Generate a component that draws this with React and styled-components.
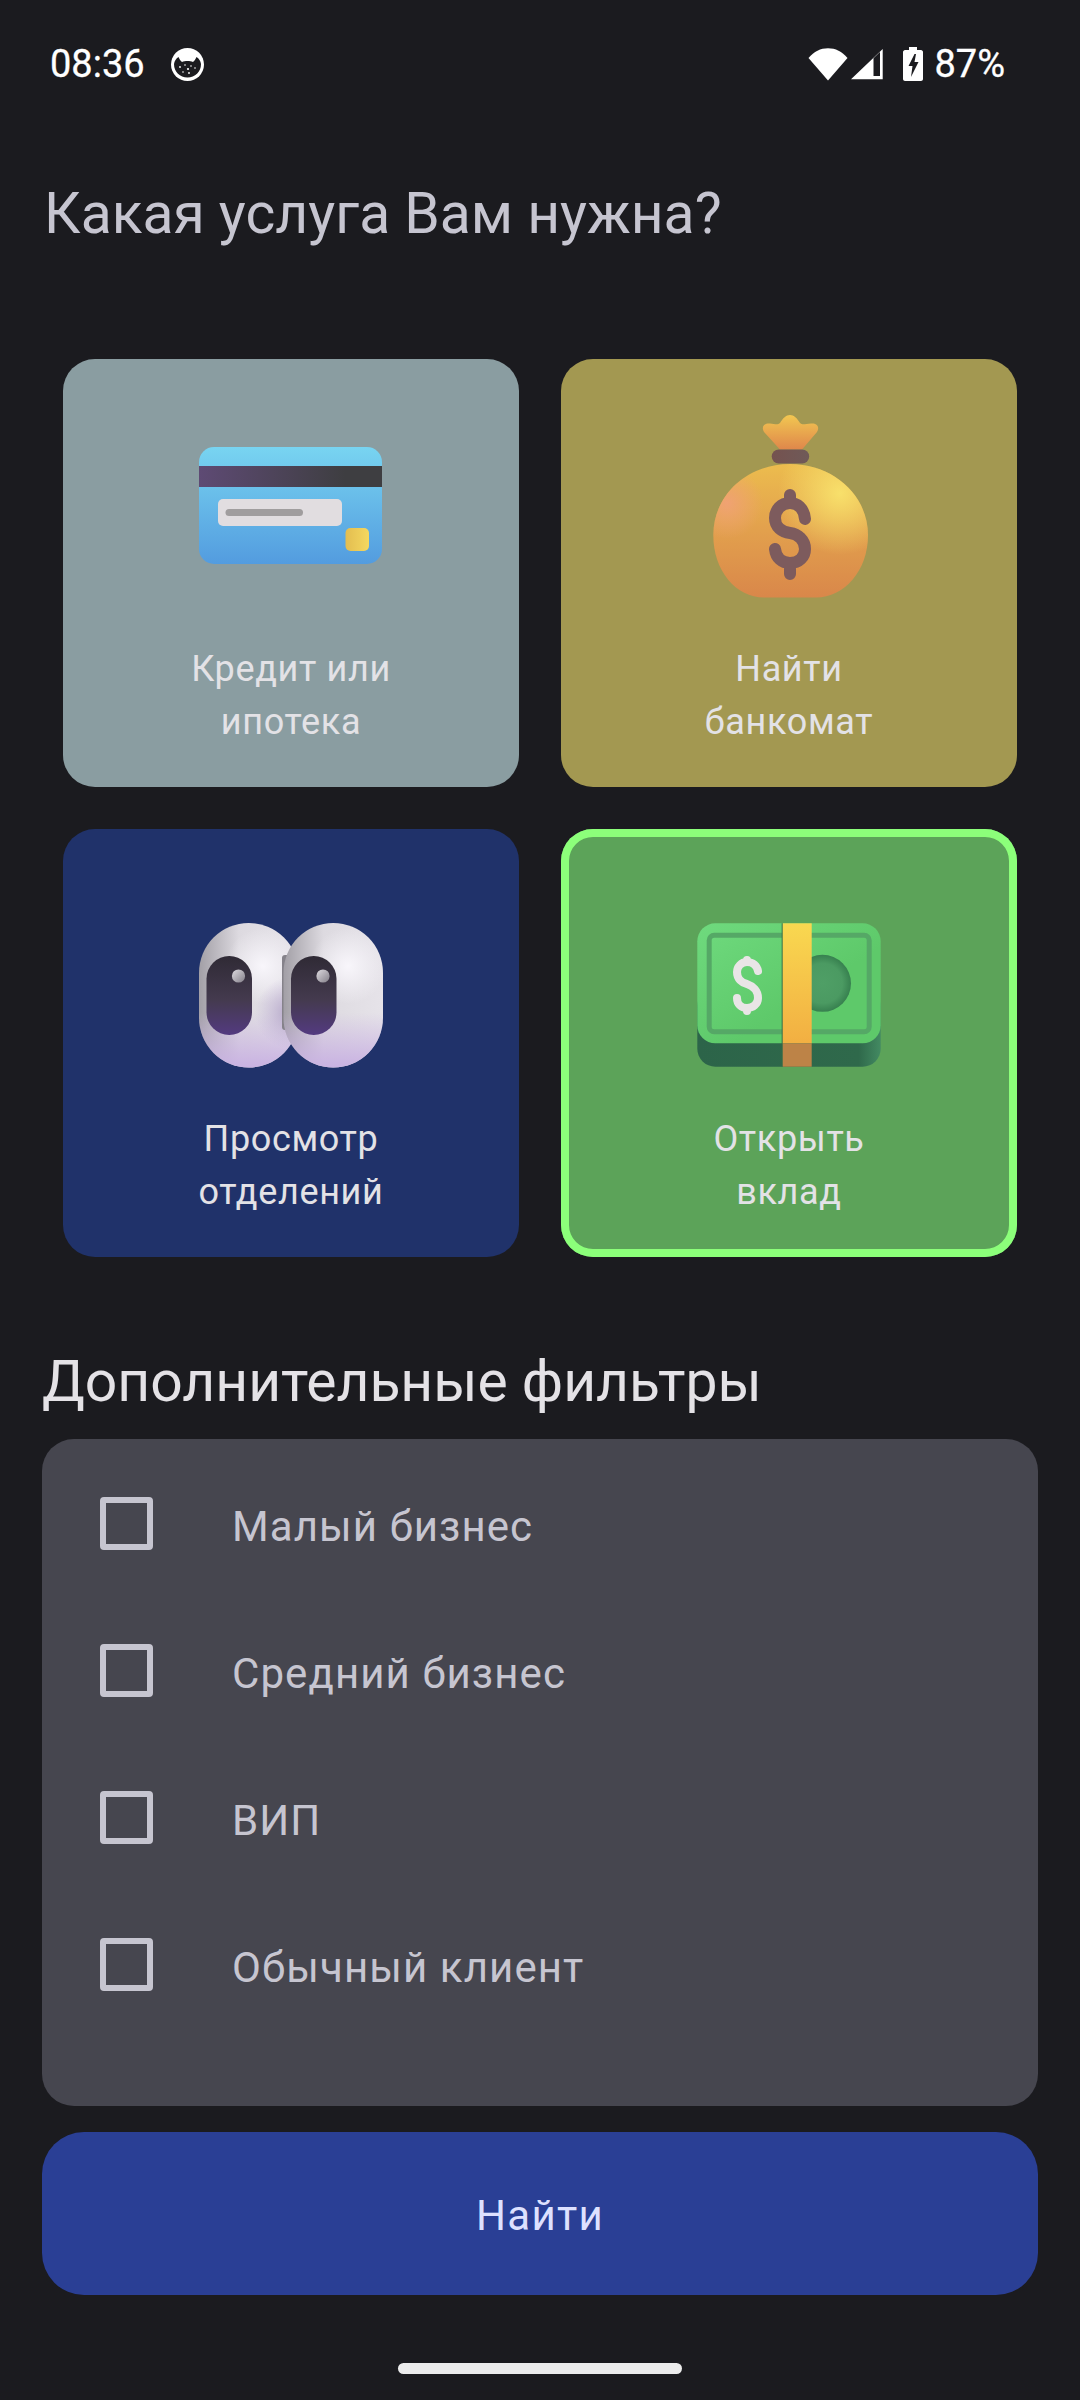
import React from "react";
import styled, { createGlobalStyle } from "styled-components";

const GlobalStyle = createGlobalStyle`
  html, body {
    margin: 0;
    padding: 0;
    background: #1b1b1f;
    font-family: Roboto, "Noto Sans", sans-serif;
  }
`;

const Screen = styled.div`
  width: 1080px;
  height: 2400px;
  background: #1b1b1f;
  display: flex;
  flex-direction: column;
  overflow: hidden;
`;

const StatusBar = styled.div`
  height: 44px;
  margin-top: 42px;
  padding: 0 75px 0 50px;
  display: flex;
  align-items: center;
  color: #fff;
  font-size: 38px;
  font-weight: 400;
  -webkit-text-stroke: 0.3px #fff;
`;

const StatusTime = styled.span`
  margin-right: 26px;
`;

const StatusRight = styled.div`
  margin-left: auto;
  display: flex;
  align-items: center;
`;

const SignalIcon = styled.svg`
  margin-left: 3px;
`;

const BatteryIcon = styled.svg`
  margin-left: 20px;
`;

const BatteryText = styled.span`
  margin-left: 11px;
`;

const Title = styled.h1`
  margin: 90px 0 0 44px;
  font-size: 57px;
  line-height: 76px;
  font-weight: 400;
  color: #c6c5d0;
`;

const CardGrid = styled.div`
  margin: 107px 63px 0;
  display: grid;
  grid-template-columns: 456px 456px;
  grid-auto-rows: 428px;
  gap: 42px;
`;

const Card = styled.div`
  background: ${(p) => p.$bg};
  border-radius: 32px;
  padding-top: 49px;
  display: flex;
  flex-direction: column;
  align-items: center;
  box-shadow: ${(p) => (p.$selected ? "inset 0 0 0 8px #8cff7a" : "none")};
`;

const CardIcon = styled.svg`
  width: 196px;
  height: 196px;
  display: block;
`;

const CardLabel = styled.div`
  margin-top: 39px;
  width: 100%;
  text-align: center;
  font-size: 36px;
  line-height: 53px;
  letter-spacing: 0.65px;
  color: #e3e2e6;
  white-space: pre-line;
`;

const FiltersTitle = styled.h2`
  margin: 87px 0 0 42px;
  font-size: 57px;
  line-height: 76px;
  font-weight: 400;
  color: #e4e2e6;
`;

const FilterPanel = styled.div`
  margin: 19px 42px 0;
  height: 667px;
  box-sizing: border-box;
  padding: 58px 58px 0;
  background: #46464f;
  border-radius: 32px;
  display: flex;
  flex-direction: column;
  gap: 94px;
`;

const FilterRow = styled.label`
  display: flex;
  align-items: center;
  height: 53px;
`;

const CheckBox = styled.span`
  width: 53px;
  height: 53px;
  box-sizing: border-box;
  border: 6px solid #c6c5d0;
  border-radius: 4px;
`;

const FilterText = styled.span`
  margin: 6px 0 0 79px;
  font-size: 42px;
  letter-spacing: 1.1px;
  color: #c6c5d0;
`;

const FindButton = styled.button`
  margin: 26px 42px 0;
  height: 163px;
  padding-top: 5px;
  border: 0;
  border-radius: 42px;
  background: #2a3f95;
  color: #dde1ff;
  font-family: inherit;
  font-size: 42px;
  letter-spacing: 1.3px;
`;

const HomeBar = styled.div`
  align-self: center;
  margin-top: 68px;
  width: 284px;
  height: 11px;
  border-radius: 6px;
  background: #ececec;
`;

function CatBadge() {
  return (
    <svg width="33" height="33" viewBox="0 0 33 33">
      <circle cx="16.5" cy="16.5" r="16.5" fill="#fff" />
      <path d="M3 16 C3.5 13 5 10.5 7.5 9 C8.5 11 9.5 13 11 14 C14 12.8 19 12.8 22 14 C23.5 13 24.5 11 25.5 9 C28 10.5 29.5 13 30 16 C30 24 24 29.5 16.5 29.5 C9 29.5 3 24 3 16Z" fill="#1b1b1f" />
      <g fill="#fff">
        <circle cx="9" cy="19" r="0.9" />
        <circle cx="14" cy="17" r="0.8" />
        <circle cx="17" cy="21" r="1.1" />
        <circle cx="20" cy="18" r="0.8" />
        <circle cx="12" cy="24" r="0.8" />
        <circle cx="18" cy="25" r="0.9" />
        <circle cx="24" cy="20" r="0.8" />
      </g>
    </svg>
  );
}

function CreditCardIcon() {
  return (
    <CardIcon viewBox="0 0 196 196">
      <defs>
        <linearGradient id="ccBody" x1="0" y1="0" x2="0" y2="1">
          <stop offset="0" stopColor="#78d4f1" />
          <stop offset="1" stopColor="#539cdf" />
        </linearGradient>
        <linearGradient id="ccStripe" x1="0" y1="0" x2="1" y2="0">
          <stop offset="0" stopColor="#5e4a74" />
          <stop offset="0.8" stopColor="#3e3e41" />
          <stop offset="1" stopColor="#3e3e41" />
        </linearGradient>
        <linearGradient id="ccChip" x1="0" y1="0" x2="1" y2="0">
          <stop offset="0" stopColor="#e3bd50" />
          <stop offset="1" stopColor="#f4d860" />
        </linearGradient>
      </defs>
      <rect x="6" y="39" width="183" height="117" rx="15" fill="url(#ccBody)" />
      <rect x="6" y="58" width="183" height="21" fill="url(#ccStripe)" />
      <rect x="25" y="91" width="124" height="27" rx="5" fill="#e1dde0" />
      <rect x="32.5" y="101" width="77.5" height="7" rx="3.5" fill="#a09d9e" />
      <rect x="152.5" y="120" width="23.5" height="23" rx="5" fill="url(#ccChip)" />
    </CardIcon>
  );
}

const BAG_BODY = "M99 56 C143 56 177 88 177 127 C177 163 153 189.5 125 189.5 H73 C45 189.5 22.3 163 22.3 127 C22.3 88 55 56 99 56Z";

function MoneyBagIcon() {
  return (
    <CardIcon viewBox="0 0 196 196">
      <defs>
        <linearGradient id="bagBody" x1="0" y1="0" x2="0" y2="1">
          <stop offset="0" stopColor="#ecbc4e" />
          <stop offset="0.5" stopColor="#e2a04d" />
          <stop offset="1" stopColor="#d9874a" />
        </linearGradient>
        <radialGradient id="bagShine" cx="149" cy="85" r="62" gradientUnits="userSpaceOnUse">
          <stop offset="0" stopColor="#f8e06b" />
          <stop offset="1" stopColor="#f8e06b" stopOpacity="0" />
        </radialGradient>
        <radialGradient id="bagBlush" cx="36" cy="95" r="36" gradientUnits="userSpaceOnUse">
          <stop offset="0" stopColor="#f0a273" />
          <stop offset="1" stopColor="#f0a273" stopOpacity="0" />
        </radialGradient>
        <linearGradient id="bagTop" x1="0" y1="0" x2="0" y2="1">
          <stop offset="0" stopColor="#f2c751" />
          <stop offset="1" stopColor="#df874b" />
        </linearGradient>
        <linearGradient id="bagNeck" x1="0" y1="0" x2="1" y2="0">
          <stop offset="0" stopColor="#75524f" />
          <stop offset="1" stopColor="#6f5a58" />
        </linearGradient>
      </defs>
      <path d="M89 41.5 L73 24 C70 19 73 15 79 15.5 C84 16 87 17 89 15 C92 10 95 7 99 7 C103 7 106 10 109 15 C111 17 114 16 120 15.5 C126 15 129 19 126 24 L111 41.5 Z" fill="url(#bagTop)" />
      <path d={BAG_BODY} fill="url(#bagBody)" />
      <path d={BAG_BODY} fill="url(#bagShine)" />
      <path d={BAG_BODY} fill="url(#bagBlush)" />
      <rect x="80.7" y="41.5" width="37.5" height="14" rx="7" fill="url(#bagNeck)" />
      <path d="M114 111 C113 100 106 95 99 95 C90 95 84 102 84 110 C84 119 91 124 99 125 C107 126 114 132 114 141 C114 149 108 155 99 155 C91 155 85 150 84 141 M99 87 V95 M99 155 V166" fill="none" stroke="#7d5b5d" strokeWidth="12" strokeLinecap="round" />
    </CardIcon>
  );
}

function Eye({ x, gid }) {
  return (
    <g>
      <rect x={x} y="45" width="99.5" height="144.5" rx="49.7" fill="url(#eyeBase)" />
      <rect x={x} y="45" width="99.5" height="144.5" rx="49.7" fill={`url(#${gid})`} />
      <rect x={x} y="45" width="99.5" height="144.5" rx="49.7" fill="url(#eyeLilac)" />
      <rect x={x + 7.5} y="78" width="45.5" height="79" rx="22.7" fill="url(#eyePupil)" />
      <circle cx={x + 39.5} cy="98" r="6.6" fill="url(#eyeGlint)" />
    </g>
  );
}

function EyesIcon() {
  return (
    <CardIcon viewBox="0 0 196 196">
      <defs>
        <linearGradient id="eyeBase" x1="0" y1="0" x2="1" y2="0">
          <stop offset="0" stopColor="#a29fa6" />
          <stop offset="0.4" stopColor="#dddae0" />
          <stop offset="1" stopColor="#e6e3e9" />
        </linearGradient>
        <radialGradient id="eyeLightL" cx="70" cy="88" r="38" gradientUnits="userSpaceOnUse">
          <stop offset="0" stopColor="#f8f6fb" />
          <stop offset="1" stopColor="#f8f6fb" stopOpacity="0" />
        </radialGradient>
        <radialGradient id="eyeLightR" cx="155" cy="88" r="38" gradientUnits="userSpaceOnUse">
          <stop offset="0" stopColor="#f8f6fb" />
          <stop offset="1" stopColor="#f8f6fb" stopOpacity="0" />
        </radialGradient>
        <linearGradient id="eyeLilac" x1="0" y1="0" x2="0" y2="1">
          <stop offset="0.62" stopColor="#c9b2e2" stopOpacity="0" />
          <stop offset="1" stopColor="#c9b2e2" />
        </linearGradient>
        <linearGradient id="eyePupil" x1="0" y1="0" x2="0" y2="1">
          <stop offset="0" stopColor="#2f2a35" />
          <stop offset="0.55" stopColor="#443a4e" />
          <stop offset="1" stopColor="#533a80" />
        </linearGradient>
        <linearGradient id="eyeGlint" x1="0" y1="0" x2="1" y2="1">
          <stop offset="0" stopColor="#dedbe0" />
          <stop offset="1" stopColor="#827e88" />
        </linearGradient>
        <radialGradient id="eyeShade" cx="98" cy="135" r="36" gradientUnits="userSpaceOnUse">
          <stop offset="0" stopColor="#b0a2c4" />
          <stop offset="1" stopColor="#c0b0d8" stopOpacity="0" />
        </radialGradient>
      </defs>
      <Eye x={6} gid="eyeLightL" />
      <rect x="6" y="45" width="99.5" height="144.5" rx="49.7" fill="url(#eyeShade)" />
      <rect x="89" y="77" width="8" height="75" rx="3" fill="#85828a" />
      <Eye x={90.5} gid="eyeLightR" />
    </CardIcon>
  );
}

function CashIcon() {
  return (
    <CardIcon viewBox="0 0 196 196">
      <defs>
        <linearGradient id="cashBase" x1="0" y1="0" x2="1" y2="0">
          <stop offset="0" stopColor="#2c6449" />
          <stop offset="0.88" stopColor="#2f694b" />
          <stop offset="1" stopColor="#438a62" />
        </linearGradient>
        <linearGradient id="cashTop" x1="0" y1="0" x2="1" y2="1">
          <stop offset="0" stopColor="#6fda7e" />
          <stop offset="0.6" stopColor="#5ec96a" />
          <stop offset="1" stopColor="#5ec96a" />
        </linearGradient>
        <radialGradient id="cashHole">
          <stop offset="0" stopColor="#4f9f66" />
          <stop offset="0.7" stopColor="#4b9a62" />
          <stop offset="1" stopColor="#37804f" />
        </radialGradient>
        <linearGradient id="cashBand" x1="0" y1="0" x2="0" y2="1">
          <stop offset="0" stopColor="#f9d850" />
          <stop offset="1" stopColor="#f2af42" />
        </linearGradient>
      </defs>
      <rect x="6.3" y="110" width="183.4" height="78.7" rx="18" fill="url(#cashBase)" />
      <rect x="6.3" y="45.3" width="183.4" height="120" rx="18" fill="url(#cashTop)" />
      <rect x="18.2" y="57.2" width="160" height="96.6" rx="5" fill="none" stroke="#55a866" strokeWidth="5" />
      <circle cx="131.5" cy="105.3" r="28.5" fill="url(#cashHole)" />
      <path d="M67 93 C66 88 62 84 56 84 C50 84 46 89 46 94 C46 101 51 105 56 106 C62 108 67 113 67 120 C67 126 62 130 56 130 C50 130 46 126 46 120 M56 82 V84 M56 130 V133" fill="none" stroke="#e9e5e6" strokeWidth="8" strokeLinecap="round" />
      <rect x="90.7" y="45.3" width="1.2" height="143" fill="#2f6b49" />
      <rect x="91.7" y="45.3" width="29" height="120" fill="url(#cashBand)" />
      <rect x="91.7" y="165.3" width="29" height="23.4" fill="#bd8347" />
    </CardIcon>
  );
}

const cards = [
  { bg: "#8a9da1", label: "Кредит или\nипотека", icon: <CreditCardIcon /> },
  { bg: "#a39851", label: "Найти\nбанкомат", icon: <MoneyBagIcon /> },
  { bg: "#20326a", label: "Просмотр\nотделений", icon: <EyesIcon /> },
  { bg: "#5ca359", label: "Открыть\nвклад", icon: <CashIcon />, selected: true },
];

const filters = ["Малый бизнес", "Средний бизнес", "ВИП", "Обычный клиент"];

export default function App() {
  return (
    <>
      <GlobalStyle />
      <Screen>
        <StatusBar>
          <StatusTime>08:36</StatusTime>
          <CatBadge />
          <StatusRight>
            <svg width="40" height="33" viewBox="0 0 40 33">
              <path d="M20 32.5 L0.5 10 C6 3.5 12.5 0.3 20 0.3 C27.5 0.3 34 3.5 39.5 10Z" fill="#fff" />
            </svg>
            <SignalIcon width="32" height="31" viewBox="0 0 32 31">
              <path fillRule="evenodd" d="M31.7 0 V30.3 H0Z M22.5 9.3 V27 H29 V3Z" fill="#fff" />
            </SignalIcon>
            <BatteryIcon width="20" height="34" viewBox="0 0 20 34">
              <path d="M6 0 H14 V3 H18 C19 3 20 4 20 5 V32 C20 33 19 34 18 34 H2 C1 34 0 33 0 32 V5 C0 4 1 3 2 3 H6Z" fill="#fff" />
              <path d="M11.5 7 L5.5 19 H9.5 L8 30 L15.5 15 H11.5 L13 7Z" fill="#1b1b1f" />
            </BatteryIcon>
            <BatteryText>87%</BatteryText>
          </StatusRight>
        </StatusBar>

        <Title>Какая услуга Вам нужна?</Title>

        <CardGrid>
          {cards.map((c) => (
            <Card key={c.label} $bg={c.bg} $selected={c.selected}>
              {c.icon}
              <CardLabel>{c.label}</CardLabel>
            </Card>
          ))}
        </CardGrid>

        <FiltersTitle>Дополнительные фильтры</FiltersTitle>
        <FilterPanel>
          {filters.map((f) => (
            <FilterRow key={f}>
              <CheckBox />
              <FilterText>{f}</FilterText>
            </FilterRow>
          ))}
        </FilterPanel>

        <FindButton>Найти</FindButton>
        <HomeBar />
      </Screen>
    </>
  );
}
